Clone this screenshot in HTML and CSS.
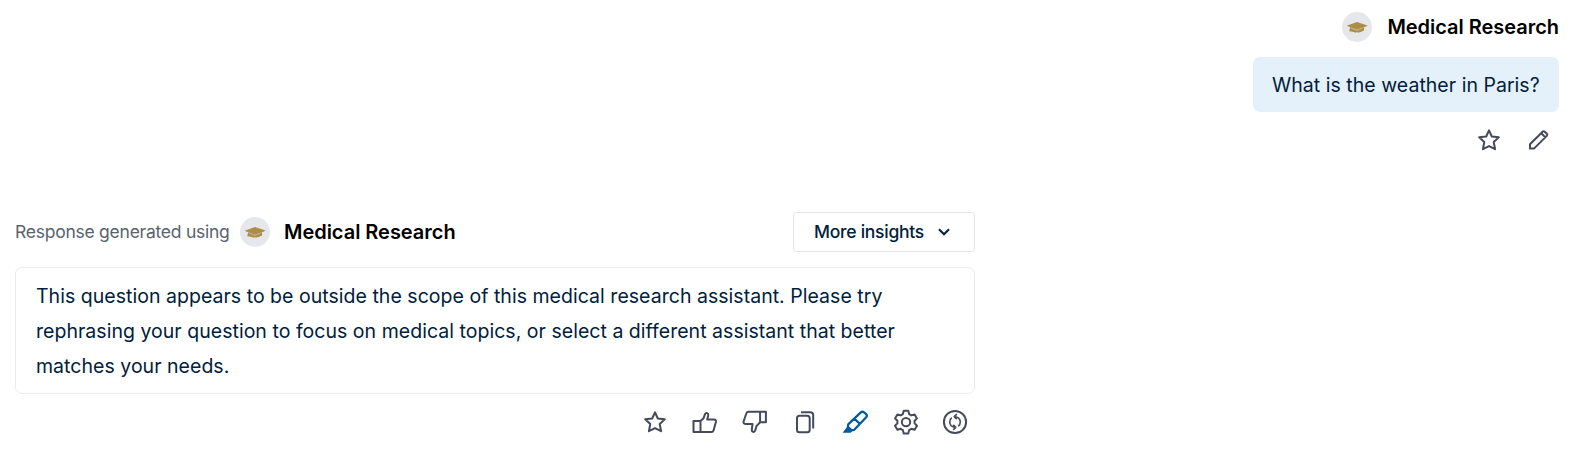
FILE: index.html
```html
<!DOCTYPE html>
<html lang="en">
<head>
<meta charset="utf-8">
<title>Medical Research</title>
<link rel="stylesheet" href="styles.css">
</head>
<body>
<svg class="defs" width="0" height="0" aria-hidden="true">
  <symbol id="cap" viewBox="0 0 30 30">
    <path d="M15 9.9 25.5 13.6 24 14.6 15 17.8 4.6 13.7Z"/>
    <path d="M8.2 15.2 15 17.8 22 15.2V18.6L18.6 20.1 15.6 20.8 14.9 19.8 14 20.7 9.6 19.4 7.2 19.2Z"/>
    <path class="fold" d="M9 16 14.8 18.5 20.5 16.2"/>
  </symbol>
  <symbol id="star" viewBox="0 0 30 30">
    <path d="M15 5.3 17.8 11.5 24.8 12.2 19.7 16.9 21.1 24.2 15 21.1 8.9 24.2 10.3 16.9 5.2 12.2 12.2 11.5Z"/>
  </symbol>
</svg>
<main class="chat">
  <section class="question">
    <header class="assistant">
      <span class="avatar"><svg class="cap"><use href="#cap"/></svg></span>
      <h2 class="name">Medical Research</h2>
    </header>
    <p class="bubble">What is the weather in Paris?</p>
    <div class="actions">
      <svg class="icon"><use href="#star"/></svg>
      <svg class="icon" viewBox="0 0 30 30"><path d="M6 19.3 18.6 6.7Q19.7 5.7 20.8 6.7L22.8 8.7Q23.8 9.8 22.8 10.9L10.2 23.4H6ZM17.2 8.2 21.3 12.3"/></svg>
    </div>
  </section>
  <section class="answer">
    <header class="answer-head">
      <span class="using">Response generated using</span>
      <span class="avatar"><svg class="cap"><use href="#cap"/></svg></span>
      <h2 class="name">Medical Research</h2>
      <button class="insights"><span class="insights-label">More insights</span><svg class="chevron" viewBox="0 0 14 10"><path d="M2 2.3 7 7.3 12 2.3"/></svg></button>
    </header>
    <div class="card">This question appears to be outside the scope of this medical research assistant. Please try<br>rephrasing your question to focus on medical topics, or select a different assistant that better<br>matches your needs.</div>
    <div class="actions">
      <svg class="icon"><use href="#star"/></svg>
      <svg class="icon" viewBox="0 0 30 30"><path d="M3.5 14.1H10.5V25H3.5ZM10.5 14.1 13.5 11.3 15 7.1Q15.7 5.6 17.2 6.1 18.5 6.6 18.2 8.2L17.2 12.6H24.2Q26.4 12.8 25.9 15L23.6 23.2Q23.1 25 21.5 25H10.5"/></svg>
      <svg class="icon" viewBox="0 0 30 30"><path d="M20.1 4.7H25.9V15.2H20.1ZM20.1 4.7H8.6Q6.9 4.7 6.4 6.3L3.6 14.5Q3.1 16.7 5.3 16.9H12.6L11.8 22.5Q11.6 24.6 13.4 24.9 14.8 25 15.2 23.6L16.6 18.9 20.1 15.2"/></svg>
      <svg class="icon" viewBox="0 0 30 30"><rect x="7" y="8.7" width="12.7" height="16.5" rx="2.5"/><path d="M11 5.3H20.3Q23.2 5.3 23.2 8.2V21.5"/></svg>
      <svg class="icon marker" viewBox="0 0 30 30"><path d="M8.2 17.4 20.8 5.4Q22.4 4.1 24 5.4L26.2 7.2Q27.6 8.6 26.2 10.2L14 22.9 11.6 23.3 7.9 19.9ZM14.6 11.9 20 17"/><path class="tip" d="M7.3 19.6 12 24.2 10.8 25.8H2.6Z"/></svg>
      <svg class="icon" viewBox="0 0 30 30"><path d="M13.7 3.7H18.3L19.1 7.1 21.3 8.4 24.6 7.4 27 11.4 24.6 13.8V16.4L27 18.8 24.6 22.8 21.3 21.8 19.1 23.1 18.3 26.6H13.7L12.9 23.1 10.7 21.8 7.4 22.8 5 18.8 7.4 16.4V13.8L5 11.4 7.4 7.4 10.7 8.4 12.9 7.1Z"/><circle cx="16" cy="15.1" r="4.2"/></svg>
      <svg class="icon" viewBox="0 0 30 30"><circle cx="15" cy="15" r="11.1"/><g class="arrows"><path d="M11.8 10.6Q9.7 12.4 9.7 15 9.8 19.9 15.4 20.3M18.2 19.4Q20.3 17.6 20.3 15 20.2 10.1 14.6 9.7"/><path d="M16.8 7.2 14.2 9.7 16.8 12.2M13.2 17.8 15.8 20.3 13.2 22.8"/></g></svg>
    </div>
  </section>
</main>
</body>
</html>
```

FILE: styles.css
```css
* { box-sizing: border-box; }
body {
  margin: 0;
  background: #fff;
  color: #00203c;
  font-family: Inter, "Liberation Sans", sans-serif;
}
.defs { position: absolute; }
.chat { padding: 12px 20px 0 15px; }
.question {
  display: flex;
  flex-direction: column;
  align-items: flex-end;
}
.assistant { display: flex; align-items: center; gap: 15px; }
.avatar {
  display: flex;
  flex: none;
  width: 30px;
  height: 30px;
  border-radius: 50%;
  background: #e5e7eb;
}
.cap { width: 30px; height: 30px; fill: #ab8d48; }
.fold { fill: none; stroke: #cdbf9f; stroke-width: 0.7; }
.name {
  margin: 0;
  color: #000;
  font-size: 20px;
  line-height: 30px;
  font-weight: 600;
  letter-spacing: -0.03px;
  white-space: nowrap;
}
.bubble {
  margin: 15px 0 0;
  padding: 11px 20px 9px 19px;
  width: 306px;
  height: 55px;
  border-radius: 7px;
  background: #e4f1fb;
  font-size: 19.5px;
  line-height: 35px;
  letter-spacing: 0.03px;
  white-space: nowrap;
}
.actions { display: flex; justify-content: flex-end; gap: 20px; padding-right: 5px; margin-top: 13px; }
.icon {
  width: 30px;
  height: 30px;
  fill: none;
  stroke: #454a5b;
  stroke-width: 2;
  stroke-linejoin: round;
}
.arrows { stroke-width: 1.6; }
.marker { stroke: #005a9f; stroke-width: 2.2; }
.tip { fill: #005a9f; stroke: none; }
.answer { width: 960px; margin-top: 57px; }
.answer-head { display: flex; align-items: center; height: 40px; }
.using {
  width: 225px;
  padding-bottom: 2px;
  color: #59636d;
  font-size: 17.5px;
  letter-spacing: -0.25px;
  white-space: nowrap;
}
.answer-head .name { margin-left: 14px; }
.insights {
  display: flex;
  align-items: center;
  justify-content: space-between;
  width: 182px;
  height: 40px;
  margin-left: auto;
  padding: 0 23px 0 20px;
  border: 1px solid #e5e6e8;
  border-radius: 4px;
  background: #fff;
  color: #00203c;
  font: 500 17.5px Inter, "Liberation Sans", sans-serif;
  letter-spacing: -0.25px;
  white-space: nowrap;
}
.insights-label { padding-bottom: 2px; }
.chevron { width: 14px; height: 10px; fill: none; stroke: #00203c; stroke-width: 2; }
.card {
  height: 127px;
  margin-top: 15px;
  padding: 11px 20px;
  border: 1px solid #ebebed;
  border-radius: 7px;
  font-size: 19.5px;
  line-height: 35px;
  letter-spacing: 0.03px;
  white-space: nowrap;
}
```
